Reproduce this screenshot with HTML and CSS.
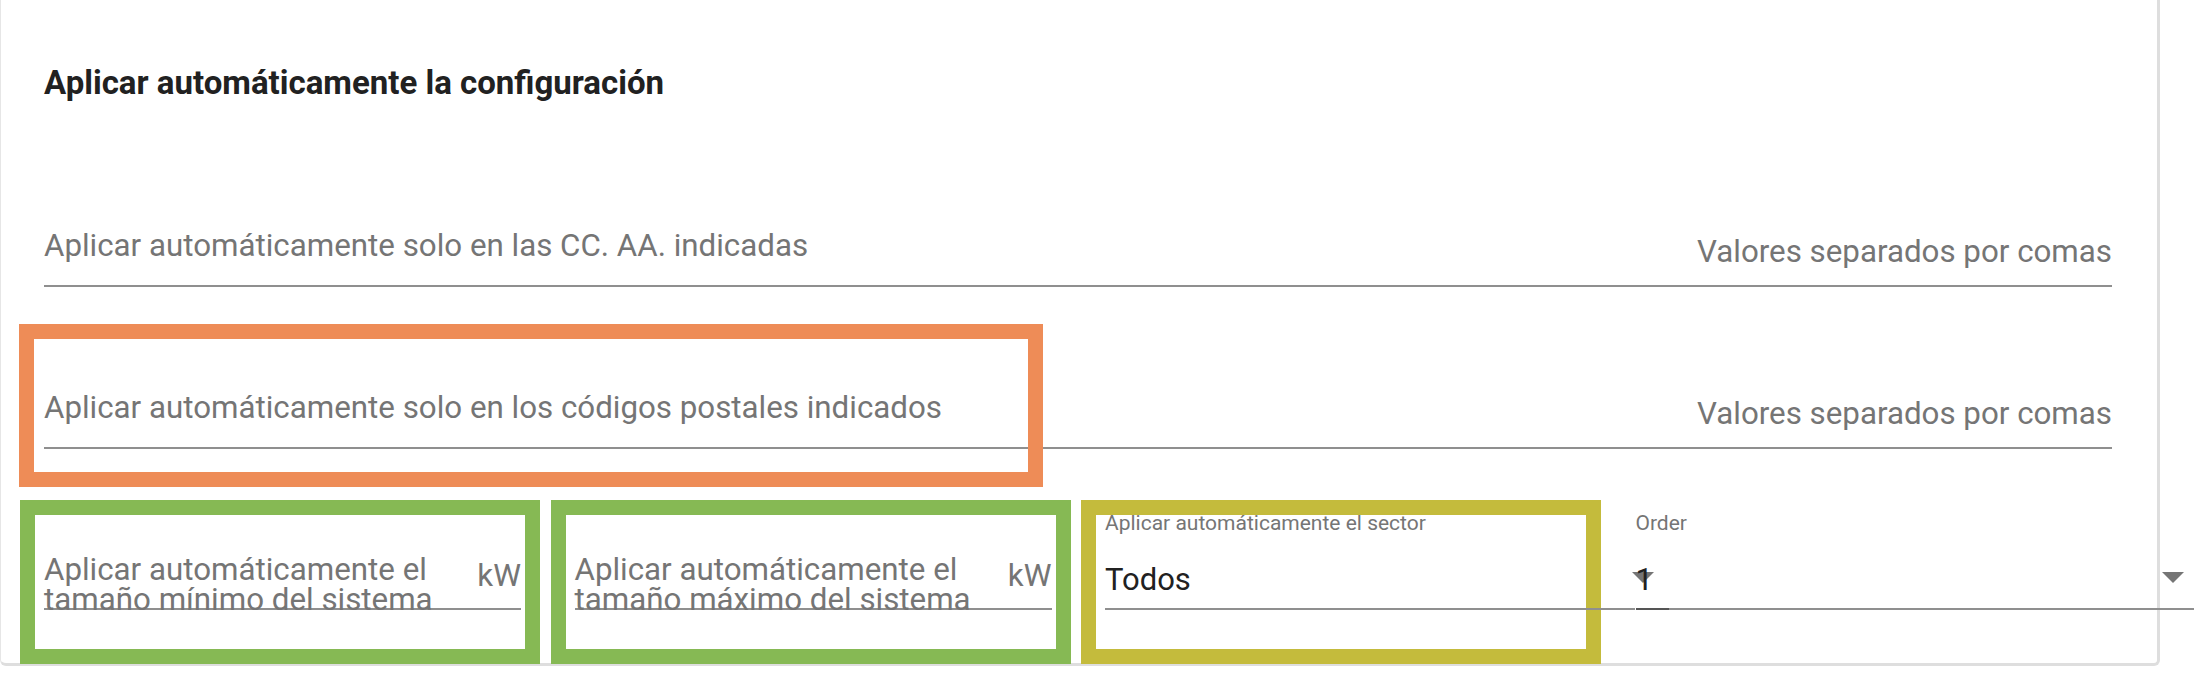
FILE: index.html
```html
<!DOCTYPE html>
<html lang="es">
<head>
    <meta charset="UTF-8">
    <meta name="viewport" content="width=device-width, initial-scale=1.0">
    <title>Aplicar automáticamente la configuración</title>
    <link rel="stylesheet" href="styles.css">
</head>
<body>
    <div class="card">
        <h3 class="card-title">Aplicar automáticamente la configuración</h3>

        <!-- comunidades autonomas -->
        <div class="field wide">
            <label class="field-label">Aplicar automáticamente solo en las CC. AA. indicadas</label>
            <span class="field-hint">Valores separados por comas</span>
        </div>

        <!-- codigos postales -->
        <div class="field wide flagged">
            <label class="field-label">Aplicar automáticamente solo en los códigos postales indicados</label>
            <span class="field-hint">Valores separados por comas</span>
        </div>

        <div class="field-grid">
            <div class="cell green">
                <div class="field unit">
                    <label class="field-label">Aplicar automáticamente el tamaño mínimo del sistema</label>
                    <span class="unit-text">kW</span>
                </div>
            </div>
            <div class="cell green">
                <div class="field unit">
                    <label class="field-label">Aplicar automáticamente el tamaño máximo del sistema</label>
                    <span class="unit-text">kW</span>
                </div>
            </div>
            <div class="cell olive">
                <div class="field select sector">
                    <label class="small-label">Aplicar automáticamente el sector</label>
                    <div class="select-value">Todos</div>
                </div>
            </div>
            <div class="cell">
                <div class="field select order">
                    <label class="small-label">Order</label>
                    <div class="select-row">
                        <div class="order-value">
                            <svg class="arrow small" width="22" height="11" viewBox="0 0 22 11"><polygon points="0,0 22,0 11,11" /></svg>
                            <span class="order-num">1</span>
                        </div>
                        <svg class="arrow" width="22" height="11" viewBox="0 0 22 11"><polygon points="0,0 22,0 11,11" /></svg>
                    </div>
                </div>
            </div>
        </div>
    </div>
</body>
</html>
```

FILE: styles.css
```css
body {
    margin: 0;
    padding: 0;
    background-color: #fff;
    font-family: Roboto, "Liberation Sans", Arial, sans-serif;
    overflow: hidden;
}
.card {
    box-sizing: border-box;
    width: 2160px;
    padding: 64px 45px 14px 43px;
    background-color: #fff;
    border-left: 1px solid #e6e6e6;
    border-right: 3px solid #dedede;
    border-bottom: 3px solid #dedede;
    border-radius: 0 0 6px 6px;
}
.card-title {
    margin: 0;
    font-size: 33px;
    line-height: 38px;
    font-weight: 700;
    color: #212121;
}
.field {
    position: relative;
    display: flex;
    justify-content: space-between;
    border-bottom: 2px solid #8f8f8f;
}
.field-label,
.field-hint,
.unit-text {
    font-size: 31.3px;
    line-height: 34px;
    color: #757575;
}
.wide {
    align-items: flex-end;
    margin-top: 104px;
}
.card-title + .wide {
    margin-top: 127px;
}
.wide .field-label {
    padding-bottom: 22px;
}
.wide .field-hint {
    padding-bottom: 16px;
}
.flagged::after {
    content: "";
    position: absolute;
    left: -25px;
    top: -67px;
    width: 1024px;
    height: 163px;
    box-sizing: border-box;
    border: 15px solid #ee8c57;
    pointer-events: none;
}
.field-grid {
    display: grid;
    grid-template-columns: repeat(4, 490px);
    column-gap: 40.5px;
    margin: 66px 0 0 -9px;
}
.cell {
    box-sizing: border-box;
    height: 134px;
    padding: 0 4px 0 9px;
}
.cell.green {
    outline: 15px solid #86b954;
}
.cell.olive {
    outline: 15px solid #c4bb3c;
}
.cell .field {
    height: 93px;
}
.unit {
    align-items: flex-start;
}
.unit .field-label {
    max-width: 420px;
    margin-top: 40px;
    line-height: 30px;
}
.unit-text {
    margin-top: 46px;
    line-height: 30px;
}
.select {
    flex-direction: column;
    justify-content: flex-start;
}
.small-label {
    margin-top: -2px;
    font-size: 21px;
    line-height: 21px;
    color: #757575;
}
.select-value {
    margin-top: 31px;
    font-size: 31px;
    line-height: 30px;
    color: #212121;
}
.sector {
    margin-right: -53px;
}
.order {
    width: 560px;
}
.select-row {
    flex: 1;
    display: flex;
    justify-content: space-between;
    margin-top: 31px;
    padding-right: 12px;
}
.order-value {
    position: relative;
    width: 33px;
    margin-bottom: -2px;
    border-bottom: 2px solid #555;
    font-size: 31px;
    line-height: 30px;
    color: #212121;
}
.order-num {
    position: relative;
}
.arrow {
    display: block;
    margin-top: 7px;
    fill: #757575;
}
.arrow.small {
    position: absolute;
    left: -4px;
    top: 7px;
    margin-top: 0;
}
```
